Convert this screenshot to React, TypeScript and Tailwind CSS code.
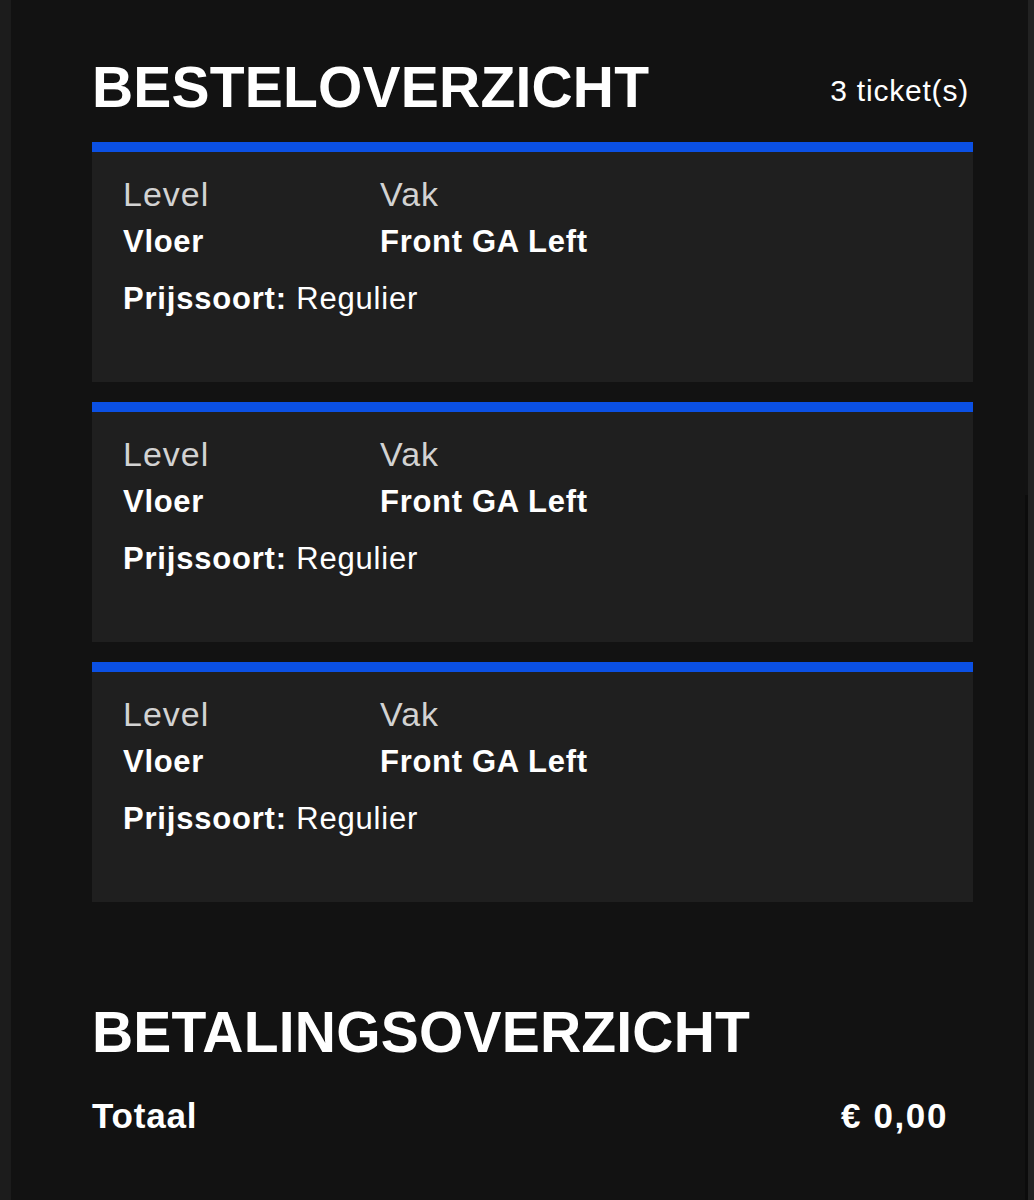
import React from "react";

const font = { fontFamily: '"Liberation Sans", Arial, Helvetica, sans-serif' };

function TicketCard() {
  return (
    <div className="h-[240px] border-t-[10px] border-[#0b50e4] bg-[#1f1f1f] pl-[31px] pt-[25px]">
      <div className="grid grid-cols-[257px_1fr]">
        <div>
          <div className="text-[34px] leading-[34px] text-[#d2d2d2] tracking-[1px]">Level</div>
          <div className="mt-[16px] text-[31px] leading-[30px] font-bold text-white tracking-[0.7px]">Vloer</div>
        </div>
        <div>
          <div className="text-[34px] leading-[34px] text-[#d2d2d2] tracking-[1px]">Vak</div>
          <div className="mt-[16px] text-[31px] leading-[30px] font-bold text-white tracking-[0.7px]">Front GA Left</div>
        </div>
      </div>
      <div className="mt-[27px] text-[31px] leading-[30px] text-white tracking-[0.8px]">
        <span className="font-bold">Prijssoort:</span> Regulier
      </div>
    </div>
  );
}

export default function App() {
  return (
    <div className="flex h-[1200px] w-[1034px] overflow-hidden bg-[#121212]" style={font}>
      <div className="w-[11px] shrink-0 bg-[#1c1c1c]" />
      <div className="flex-1 pl-[81px] pr-[52px] pt-[59px]">
        <div className="flex items-start justify-between pr-[4px]">
          <h1 className="text-[57px] leading-[57px] font-bold text-white tracking-[0.2px]">BESTELOVERZICHT</h1>
          <span className="mt-[17px] text-[30px] leading-[30px] text-white tracking-[0.8px]">3 ticket(s)</span>
        </div>
        <div className="mt-[26px] flex flex-col gap-[20px]">
          <TicketCard />
          <TicketCard />
          <TicketCard />
        </div>
        <h2 className="mt-[102px] text-[57px] leading-[57px] font-bold text-white tracking-[0.2px]">BETALINGSOVERZICHT</h2>
        <div className="mt-[37px] flex items-start justify-between pr-[25px] text-[35px] leading-[35px] font-bold text-white">
          <span className="tracking-[0.8px]">Totaal</span>
          <span className="tracking-[1.6px]">€ 0,00</span>
        </div>
      </div>
      <div className="w-[3px] shrink-0 pt-[495px]">
        <div className="h-full bg-[#0c0c0c]" />
      </div>
      <div className="w-[6px] shrink-0 bg-[#222222]" />
    </div>
  );
}
